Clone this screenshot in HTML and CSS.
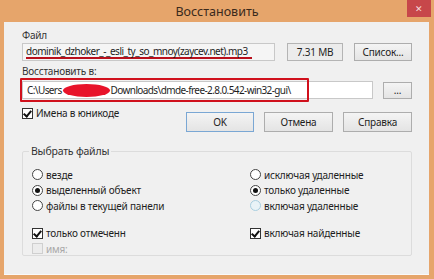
FILE: index.html
```html
<!DOCTYPE html>
<html>
<head>
  <title>Восстановить</title>
  <link rel="stylesheet" href="styles.css">
</head>
<body>
  <div class="window">
    <div class="titlebar">
      <span class="title">Восстановить</span>
      <span class="close">&#x2715;</span>
    </div>

    <div class="client">
      <div class="label">Файл</div>
      <div class="row">
        <div class="field file-field">
          <span class="underlined">dominik_dzhoker_-_esli_ty_so_mnoy(zaycev.net).mp3</span>
        </div>
        <div class="field size-field">7.31 MB</div>
        <button class="btn list-btn">Список...</button>
      </div>

      <div class="label">Восстановить в:</div>
      <div class="row">
        <div class="field path-field">
          <span>C:\Users</span><span class="blob"></span><span>Downloads\dmde-free-2.8.0.542-win32-gui\</span>
          <div class="red-box"></div>
        </div>
        <button class="btn dots-btn">...</button>
      </div>

      <div class="options-row">
        <label class="check"><span class="box checked"></span>Имена в юникоде</label>
        <div class="buttons">
          <button class="btn default">OK</button>
          <button class="btn">Отмена</button>
          <button class="btn">Справка</button>
        </div>
      </div>

      <fieldset class="group">
        <legend>Выбрать файлы</legend>
        <div class="columns">
          <div class="col">
            <label class="radio"><span class="circle"></span>везде</label>
            <label class="radio"><span class="circle on"></span>выделенный объект</label>
            <label class="radio"><span class="circle"></span>файлы в текущей панели</label>
            <label class="check spaced"><span class="box checked"></span>только отмеченн</label>
            <label class="check disabled"><span class="box"></span>имя:</label>
          </div>
          <div class="col">
            <label class="radio"><span class="circle"></span>исключая удаленные</label>
            <label class="radio"><span class="circle on"></span>только удаленные</label>
            <label class="radio"><span class="circle off"></span>включая удаленные</label>
            <label class="check spaced"><span class="box checked"></span>включая найденные</label>
          </div>
        </div>
      </fieldset>
    </div>
  </div>
</body>
</html>
```

FILE: styles.css
```css
body {
  margin: 0;
  background-color: #e6a56b;
  font-family: "Noto Sans", "Open Sans", sans-serif;
  font-size: 10px;
  letter-spacing: -0.2px;
  color: #1e1e1e;
}

.window {
  width: 434px;
  height: 279px;
  overflow: hidden;
}

.titlebar {
  position: relative;
  height: 22px;
  display: flex;
  align-items: center;
  justify-content: center;
}

.title {
  font-size: 12.5px;
  letter-spacing: 0;
  color: #3b2a1c;
}

.close {
  position: absolute;
  top: 0;
  right: 3px;
  width: 24px;
  height: 17px;
  background-color: #c7474a;
  color: #f6dada;
  font-size: 9px;
  display: flex;
  align-items: center;
  justify-content: center;
}

.client {
  margin: 0 5px 0 4px;
  height: 253px;
  background-color: #f0f0f0;
  padding: 6px 0 0 17px;
  box-sizing: border-box;
  box-shadow: inset 0 -1px 0 #fafafa;
}

.label {
  height: 14px;
  line-height: 14px;
  margin-left: 1px;
  color: #333;
}

.row {
  display: flex;
  align-items: center;
  margin: 1px 0 3px 1px;
}

.field {
  height: 18px;
  box-sizing: border-box;
  border: 1px solid #c8c8c8;
  background-color: #fff;
  display: flex;
  align-items: center;
  padding-left: 3px;
  white-space: nowrap;
  letter-spacing: -0.5px;
}

.file-field {
  width: 253px;
  background-color: #f5f5f5;
}

.underlined {
  border-bottom: 2px solid #b8101c;
  line-height: 12px;
  padding-right: 4px;
}

.size-field {
  width: 56px;
  margin-left: 12px;
  justify-content: center;
  padding: 0;
  background-color: #ececec;
  border-color: #b4b4b4;
  letter-spacing: -0.2px;
}

.btn {
  height: 18px;
  box-sizing: border-box;
  border: 1px solid #adadad;
  background: linear-gradient(#f4f4f4, #e4e4e4);
  font-family: inherit;
  font-size: 10px;
  letter-spacing: -0.2px;
  color: #1e1e1e;
  padding: 0;
}

.list-btn {
  width: 58px;
  margin-left: 11px;
}

.path-field {
  position: relative;
  width: 351px;
  margin-top: 2px;
  padding-left: 4px;
  letter-spacing: -0.6px;
}

.blob {
  display: inline-block;
  width: 47px;
  height: 13px;
  margin: 0 1px 0 1px;
  border-radius: 50%;
  background-color: #e8132a;
}

.red-box {
  position: absolute;
  left: -3px;
  top: -4px;
  width: 285px;
  height: 20px;
  border: 2px solid #d0101c;
  border-radius: 1px;
}

.dots-btn {
  width: 29px;
  height: 17px;
  margin-left: 10px;
  margin-top: 2px;
}

.options-row {
  display: flex;
  justify-content: space-between;
  width: 390px;
  margin-left: 1px;
}

.buttons {
  display: flex;
  gap: 10px;
  margin-top: 10px;
}

.buttons .btn {
  width: 69px;
  height: 20px;
}

.buttons .default {
  width: 68px;
  border-color: #7aa7d4;
}

.check,
.radio {
  display: flex;
  align-items: center;
  height: 15.5px;
  white-space: nowrap;
}

.options-row .check {
  margin-top: 4px;
  height: 14px;
}

.box {
  width: 9px;
  height: 9px;
  border: 1px solid #333;
  background-color: #fff;
  margin-right: 3px;
  position: relative;
}

.box.checked::after {
  content: "";
  position: absolute;
  left: 2px;
  top: 0px;
  width: 3px;
  height: 6px;
  border: solid #111;
  border-width: 0 2px 2px 0;
  transform: rotate(40deg);
}

.disabled {
  color: #a8a8a8;
}

.disabled .box {
  border-color: #cfcfcf;
  background-color: #ececec;
}

.circle {
  width: 9px;
  height: 9px;
  border: 1px solid #444;
  border-radius: 50%;
  background-color: #fff;
  margin-right: 3px;
  position: relative;
}

.circle.on::after {
  content: "";
  position: absolute;
  left: 2px;
  top: 2px;
  width: 5px;
  height: 5px;
  border-radius: 50%;
  background-color: #111;
}

.circle.off {
  border-color: #a9cfe0;
  background-color: #e9f3f7;
}

.group {
  width: 390px;
  height: 112px;
  box-sizing: border-box;
  margin: 12px 0 0 1px;
  padding: 9px 0 0 9px;
  border: 1px solid #dcdcdc;
  border-radius: 2px;
}

legend {
  padding: 0 2px;
  margin-left: -3px;
  color: #333;
  font-size: 10.5px;
}

.columns {
  display: grid;
  grid-template-columns: 218px 1fr;
}

.spaced {
  margin-top: 12px;
}
```
